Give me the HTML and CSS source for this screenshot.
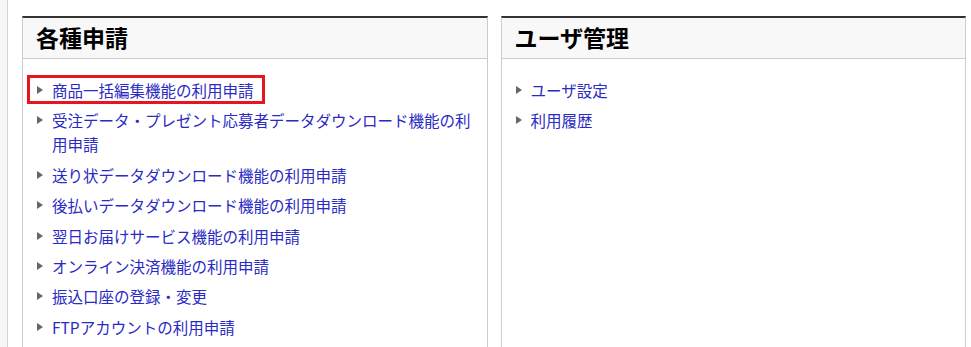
FILE: index.html
```html
<!DOCTYPE html>
<html lang="ja">

<head>
    <meta charset="utf-8">
    <title>各種申請</title>
    <meta name="viewport" content="width=device-width, initial-scale=1">
    <link rel="stylesheet" href="styles.css">
</head>

<body>
    <div class="page">
        <div class="side"></div>
        <div class="main">

            <div class="panel">
                <div class="panel-head">
                    <h2>各種申請</h2>
                </div>
                <ul class="menu">
                    <li class="marked"><span class="arrow"></span><a href="#">商品一括編集機能の利用申請</a></li>
                    <li><span class="arrow"></span><a href="#">受注データ・プレゼント応募者データダウンロード機能の利用申請</a></li>
                    <li><span class="arrow"></span><a href="#">送り状データダウンロード機能の利用申請</a></li>
                    <li><span class="arrow"></span><a href="#">後払いデータダウンロード機能の利用申請</a></li>
                    <li><span class="arrow"></span><a href="#">翌日お届けサービス機能の利用申請</a></li>
                    <li><span class="arrow"></span><a href="#">オンライン決済機能の利用申請</a></li>
                    <li><span class="arrow"></span><a href="#">振込口座の登録・変更</a></li>
                    <li><span class="arrow"></span><a href="#">FTPアカウントの利用申請</a></li>
                </ul>
            </div>

            <div class="panel">
                <div class="panel-head">
                    <h2>ユーザ管理</h2>
                </div>
                <ul class="menu">
                    <li><span class="arrow"></span><a href="#">ユーザ設定</a></li>
                    <li><span class="arrow"></span><a href="#">利用履歴</a></li>
                </ul>
            </div>

        </div>
    </div>
</body>

</html>
```

FILE: styles.css
```css
* {
    box-sizing: border-box;
}

html,
body {
    margin: 0;
    background: #fff;
    font-family: "Noto Sans CJK JP", "Noto Sans", sans-serif;
}

.page {
    display: flex;
    min-height: 347px;
}

.side {
    width: 8px;
    flex: none;
    background: #f7f7f7;
    border-right: 1px solid #d6d6d6;
}

.main {
    flex: 1;
    display: flex;
    gap: 13px;
    padding: 16px 5px 0 14px;
}

.panel {
    flex: 1;
    border: 1px solid #cccccc;
    border-top: 2px solid #333333;
    border-bottom: 0;
    padding-bottom: 40px;
}

.panel-head {
    height: 41px;
    display: flex;
    align-items: center;
    padding: 0 13px 2px;
    background: #f8f8f8;
    border-bottom: 1px solid #cccccc;
}

.panel-head h2 {
    margin: 0;
    font-size: 23px;
    font-weight: bold;
    line-height: 1;
    color: #000;
}

.menu {
    list-style: none;
    margin: 0;
    padding: 19px 10px 0 14px;
}

.menu li {
    display: flex;
    align-items: flex-start;
    font-size: 15.5px;
    line-height: 24px;
    margin-bottom: 6.4px;
}

.arrow {
    flex: none;
    width: 0;
    height: 0;
    margin: 8px 9px 0 0;
    border-left: 6px solid #666;
    border-top: 4px solid transparent;
    border-bottom: 4px solid transparent;
}

.menu a {
    color: #2a2ac4;
    text-decoration: none;
}

/* red frame drawn around the first item */
.menu li.marked {
    width: fit-content;
    position: relative;
}

.menu li.marked:after {
    content: "";
    position: absolute;
    top: -3px;
    bottom: -2px;
    left: -10px;
    right: -11px;
    border: 3px solid #e8141e;
}
```
